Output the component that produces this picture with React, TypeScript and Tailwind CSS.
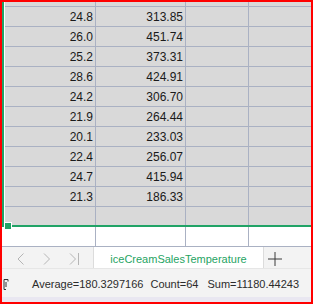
import React from 'react';

const rows: [string, string][] = [
  ['24.8', '313.85'],
  ['26.0', '451.74'],
  ['25.2', '373.31'],
  ['28.6', '424.91'],
  ['24.2', '306.70'],
  ['21.9', '264.44'],
  ['20.1', '233.03'],
  ['22.4', '256.07'],
  ['24.7', '415.94'],
  ['21.3', '186.33'],
];

const cols = 'grid grid-cols-[94px_90px_63px_1fr]';
const cell = 'border-r border-[#aab1c3] last:border-r-0';

function Row({ a, b, h, white }: { a?: string; b?: string; h: string; white?: boolean }) {
  return (
    <div className={`${cols} ${h} border-b border-[#aab1c3] ${white ? 'bg-white' : 'bg-[#d9d9d9]'}`}>
      <div className={`${cell} text-right pr-[2px] leading-[21px]`}>{a}</div>
      <div className={`${cell} text-right pr-[2px] leading-[21px]`}>{b}</div>
      <div className={cell} />
      <div />
    </div>
  );
}

function Chevron({ dir, bar }: { dir: 'left' | 'right'; bar?: boolean }) {
  return (
    <svg width="10" height="12" viewBox="0 0 10 12" fill="none" stroke="#b5b5b5" strokeWidth={1}>
      {dir === 'left' ? <path d="M6.5 0.5L1 6l5.5 5.5" /> : <path d="M1 0.5L6.5 6L1 11.5" />}
      {bar && <path d="M9.5 0v12" />}
    </svg>
  );
}

export default function App() {
  return (
    <div className="w-[313px] h-[304px] border-2 border-[#ff0000] bg-white flex flex-col overflow-hidden text-[#1a1a1a]" style={{ fontFamily: '"Liberation Sans", Arial, sans-serif' }}>
      {/* Sheet grid */}
      <div className="relative text-[12px]">
        <Row h="h-[5px]" />
        {rows.map(([a, b]) => (
          <Row key={a + b} a={a} b={b} h="h-[20px]" />
        ))}
        <Row h="h-[20px]" />
        <Row h="h-[20px]" white />

        {/* selection border */}
        <div className="absolute left-0 top-0 right-0 h-[225px] border-l-2 border-b-2 border-[#21a366]">
          <div className="h-full border-l border-white" />
        </div>
        {/* fill handle */}
        <div className="absolute left-[2px] top-[220px] w-[8px] h-[8px] bg-[#21a366] border border-white" />
      </div>

      {/* Sheet tabs */}
      <div className="h-[21px] bg-[#f3f3f3] flex items-stretch">
        <div className="w-[91px] flex items-center pl-[15px] gap-[16px] pt-[2px]">
          <Chevron dir="left" />
          <Chevron dir="right" />
          <Chevron dir="right" bar />
        </div>
        <div className="w-[171px] bg-white border-l border-r border-[#dcdcdc] flex items-center justify-center text-[11px] text-[#1fa463] pt-[3px]">
          iceCreamSalesTemperature
        </div>
        <div className="w-[22px] flex items-center justify-center pt-[3px]">
          <svg width="14" height="14" viewBox="0 0 14 14" stroke="#3a3a3a" strokeWidth={1}>
            <path d="M7 0v14M0 7h14" />
          </svg>
        </div>
      </div>

      {/* Status bar */}
      <div className="h-[29px] bg-[#f3f3f3] border-t border-[#e6e6e6] flex items-center text-[11px] text-[#2b2b2b]">
        <svg className="ml-[1px] mt-[3px]" width="6" height="11" viewBox="0 0 6 11" fill="none" stroke="#333" strokeWidth={1}>
          <path d="M1 0.5h4v2M1 0.5v10h2M3 3v5" />
        </svg>
        <div className="flex ml-[23px] pt-[3px]">
          <span>Average=180.3297166</span>
          <span className="ml-[7px]">Count=64</span>
          <span className="ml-[9px]">Sum=11180.44243</span>
        </div>
      </div>
      <div className="flex-1 bg-[#e9e7f1]" />
    </div>
  );
}
